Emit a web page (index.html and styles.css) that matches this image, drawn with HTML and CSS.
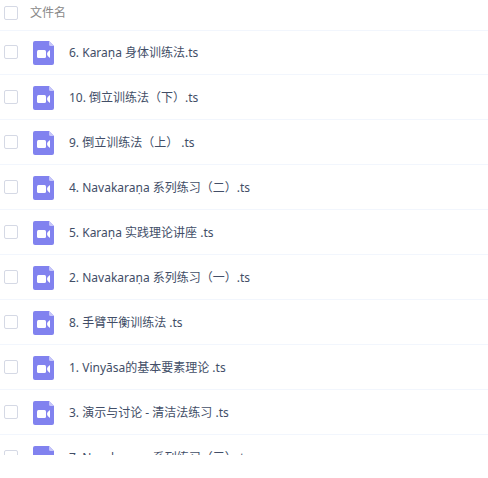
FILE: index.html
```html
<!DOCTYPE html>
<html lang="zh-CN">
<head>
<meta charset="utf-8">
<title>文件列表</title>
<link rel="stylesheet" href="styles.css">
</head>
<body>
<svg class="defs" aria-hidden="true">
  <symbol id="video-file" viewBox="0 0 21 24">
    <path fill="#8182ef" d="M2 0H16L21 5V22Q21 24 19 24H2Q0 24 0 22V2Q0 0 2 0Z"/>
    <path fill="#c6c6fa" d="M16 0L21 5H17.500Q16 5 16 3.500Z"/>
    <rect x="4" y="9" width="9" height="8" rx="1.500" fill="#fff"/>
    <path fill="#fff" d="M17 9V17L14.700 15Q13.200 13 14.700 11Z"/>
  </symbol>
</svg>
<main class="file-list">
  <table class="files">
    <thead>
      <tr>
        <th class="pick"><input type="checkbox" aria-label="全选"></th>
        <th class="name" colspan="2">文件名</th>
      </tr>
    </thead>
    <tbody>
      <tr>
        <td class="pick"><input type="checkbox" id="f1"></td>
        <td class="type"><svg class="icon"><use href="#video-file"/></svg></td>
        <td class="name"><label for="f1">6. Karaṇa 身体训练法.ts</label></td>
      </tr>
      <tr>
        <td class="pick"><input type="checkbox" id="f2"></td>
        <td class="type"><svg class="icon"><use href="#video-file"/></svg></td>
        <td class="name"><label for="f2">10. 倒立训练法（下）.ts</label></td>
      </tr>
      <tr>
        <td class="pick"><input type="checkbox" id="f3"></td>
        <td class="type"><svg class="icon"><use href="#video-file"/></svg></td>
        <td class="name"><label for="f3">9. 倒立训练法（上） .ts</label></td>
      </tr>
      <tr>
        <td class="pick"><input type="checkbox" id="f4"></td>
        <td class="type"><svg class="icon"><use href="#video-file"/></svg></td>
        <td class="name"><label for="f4">4. Navakaraṇa 系列练习（二）.ts</label></td>
      </tr>
      <tr>
        <td class="pick"><input type="checkbox" id="f5"></td>
        <td class="type"><svg class="icon"><use href="#video-file"/></svg></td>
        <td class="name"><label for="f5">5. Karaṇa 实践理论讲座 .ts</label></td>
      </tr>
      <tr>
        <td class="pick"><input type="checkbox" id="f6"></td>
        <td class="type"><svg class="icon"><use href="#video-file"/></svg></td>
        <td class="name"><label for="f6">2. Navakaraṇa 系列练习（一）.ts</label></td>
      </tr>
      <tr>
        <td class="pick"><input type="checkbox" id="f7"></td>
        <td class="type"><svg class="icon"><use href="#video-file"/></svg></td>
        <td class="name"><label for="f7">8. 手臂平衡训练法 .ts</label></td>
      </tr>
      <tr>
        <td class="pick"><input type="checkbox" id="f8"></td>
        <td class="type"><svg class="icon"><use href="#video-file"/></svg></td>
        <td class="name"><label for="f8">1. Vinyāsa的基本要素理论 .ts</label></td>
      </tr>
      <tr>
        <td class="pick"><input type="checkbox" id="f9"></td>
        <td class="type"><svg class="icon"><use href="#video-file"/></svg></td>
        <td class="name"><label for="f9">3. 演示与讨论 - 清洁法练习 .ts</label></td>
      </tr>
      <tr>
        <td class="pick"><input type="checkbox" id="f10"></td>
        <td class="type"><svg class="icon"><use href="#video-file"/></svg></td>
        <td class="name"><label for="f10">7. Navakaraṇa 系列练习（三）.ts</label></td>
      </tr>
    </tbody>
  </table>
</main>
</body>
</html>
```
FILE: styles.css
```css
* {
  box-sizing: border-box;
}

body {
  display: flex;
  flex-direction: column;
  height: 100vh;
  margin: 0;
  padding-bottom: 23px;
  background: #fff;
  color: #424e67;
  font-family: "Noto Sans", "Noto Sans CJK SC", sans-serif;
  font-size: 12px;
  line-height: 18px;
}

.defs {
  display: none;
}

.file-list {
  flex: 1;
  min-height: 0;
  overflow: hidden;
}

.files {
  width: 100%;
  border-spacing: 0;
}

th,
td {
  height: 45px;
  padding: 0;
  border-bottom: 1px solid #f2f6fd;
  font-weight: 400;
  text-align: left;
  vertical-align: top;
}

thead th {
  height: 30px;
  border-bottom: 0;
  color: #888;
}

tbody tr:first-child td {
  border-top: 1px solid #f2f6fd;
}

.pick {
  width: 30px;
  padding: 15px 0 0 4px;
}

thead .pick {
  padding-top: 6px;
}

input {
  display: block;
  width: 14px;
  height: 14px;
  margin: 0;
  border: 1px solid #d5d9e5;
  border-radius: 2px;
  background: #fff;
  appearance: none;
}

input:checked {
  background: #8182ef;
}

.type {
  width: 39px;
  padding: 11px 0 0 3px;
}

.icon {
  display: block;
  width: 21px;
  height: 24px;
}

td.name {
  padding-top: 14px;
}

th.name {
  padding-top: 4px;
}

label {
  display: block;
}

tbody tr:first-child .pick {
  padding-top: 14px;
}

tbody tr:first-child .type {
  padding-top: 10px;
}

tbody tr:first-child .name {
  padding-top: 13px;
}
```
